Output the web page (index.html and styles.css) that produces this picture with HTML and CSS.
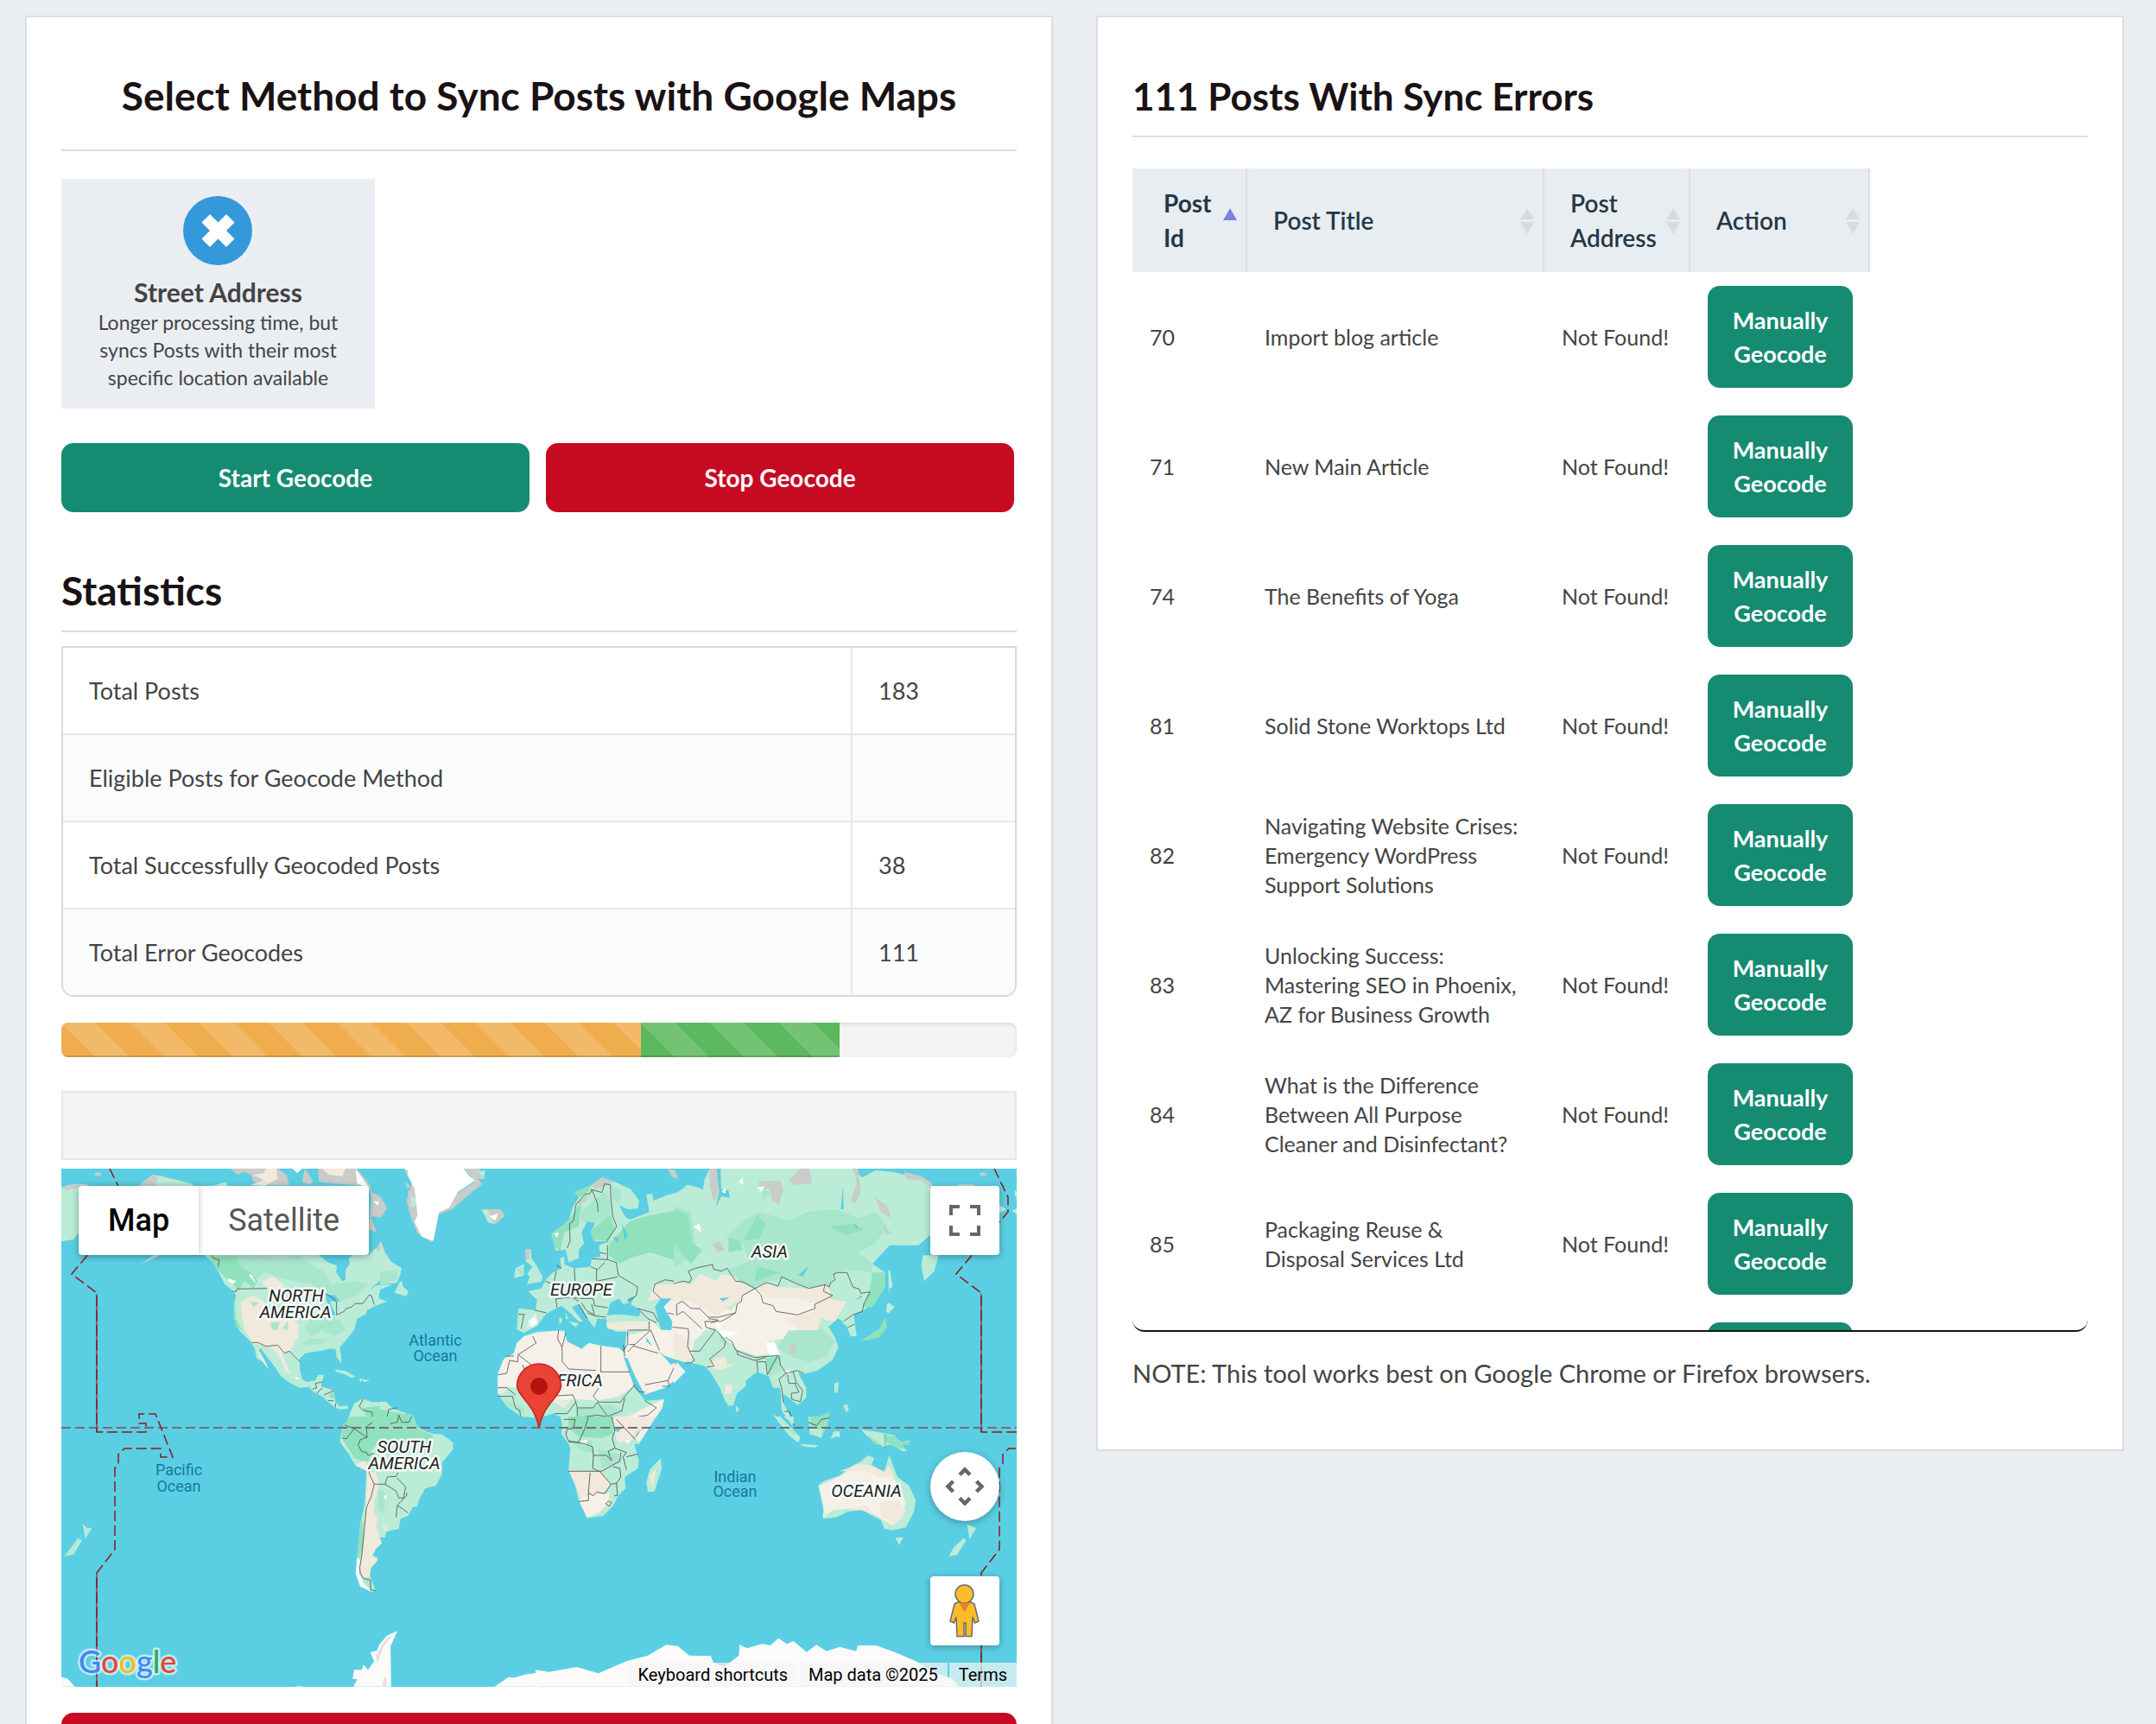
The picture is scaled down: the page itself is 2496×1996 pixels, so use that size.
FILE: index.html
```html
<!DOCTYPE html>
<html lang="en">
<head>
<meta charset="utf-8">
<title>Geocode Posts</title>
<link rel="stylesheet" href="styles.css">
</head>
<body>
<main class="page">
  <section class="panel">
    <h1 class="title title-center">Select Method to Sync Posts with Google Maps</h1>

    <button class="method" type="button">
      <svg class="method-icon" viewBox="0 0 80 80" aria-hidden="true">
        <circle cx="40" cy="40" r="40" fill="#3498db"/>
        <path d="M21.500 30.500 31 21 40.500 30.500 50 21 59.500 30.500 50 40 59.500 49.500 50 59 40.500 49.500 31 59 21.500 49.500 31 40Z" fill="#fff"/>
      </svg>
      <span class="method-name">Street Address</span>
      <span class="method-text">Longer processing time, but syncs Posts with their most specific location available</span>
    </button>

    <div class="actions">
      <button class="btn btn-green" type="button">Start Geocode</button>
      <button class="btn btn-red" type="button">Stop Geocode</button>
    </div>

    <h2 class="title title-stats">Statistics</h2>
    <table class="stats">
      <tbody>
        <tr><td>Total Posts</td><td>183</td></tr>
        <tr><td>Eligible Posts for Geocode Method</td><td></td></tr>
        <tr><td>Total Successfully Geocoded Posts</td><td>38</td></tr>
        <tr><td>Total Error Geocodes</td><td>111</td></tr>
      </tbody>
    </table>

    <div class="progress">
      <div class="bar bar-error" style="width:60.66%"></div>
      <div class="bar bar-done" style="width:20.77%"></div>
    </div>

    <input class="log" type="text" aria-label="Current address" readonly>

    <div class="map">
      <svg class="map-canvas" viewBox="0 0 1106 600" preserveAspectRatio="xMidYMid slice" role="img" aria-label="World map">
        <rect width="1106" height="600" fill="#5acfe3"/>
        <!-- north america -->
        <g transform="translate(-11 -13) scale(.33333)">
          <g fill="#bbecd7">
            <path d="M33 105 60 95 120 92 150 110 140 250 93 262 75 285 33 292Z"/>
            <path d="M305 95 350 60 400 70 480 90 520 110 620 110 900 110 960 150 1000 180 940 320 990 375 988 400 1008 430 1020 425 1020 390 1035 370 1030 345 1060 335 1100 340 1125 315 1145 320 1165 340 1175 360 1215 385 1212 400 1190 395 1150 420 1120 445 1095 470 1125 445 1185 440 1140 460 1135 490 1165 500 1125 515 1095 530 1090 545 1060 560 1050 600 1030 625 1000 660 1005 690 1005 715 990 695 985 665 960 665 935 672 910 675 880 680 860 700 862 740 870 770 885 780 915 775 925 755 945 755 935 795 950 800 980 810 985 850 1000 865 1028 862 1030 872 1005 875 985 870 960 850 940 830 905 812 895 798 860 800 830 785 795 760 780 735 745 690 725 662 720 670 740 705 755 737 735 710 712 700 705 665 690 640 650 600 633 560 632 520 640 480 625 460 600 440 580 400 560 365 530 339 420 320 310 370 360 335 330 250Z"/>
            <path d="M1190 470 1210 430 1218 448 1238 465 1230 482Z"/>
            <path d="M985 737 1020 742 1055 762 1040 766 1015 752 985 744ZM1065 768 1106 775 1075 782Z"/>
            <path d="M1000 990 1010 960 1025 920 1035 890 1050 855 1080 838 1110 850 1160 850 1180 870 1250 895 1262 912 1262 990Z"/>
            <path d="M560 99 605 85 610 99Z"/>
          </g>
          <path fill="#5acfe3" d="M915 330 960 365 988 375 1040 345 1030 310 960 300Z"/>
          <path fill="#a8e6cd" d="M580 340 720 345 800 350 850 339 900 370 950 400 970 440 1050 430 1100 440 1060 480 1000 500 960 470 900 440 800 420 740 400 700 430 640 400ZM900 560 960 545 1000 570 1020 600 980 620 940 600 900 620 880 590ZM860 650 900 630 960 630 930 650Z"/>
          <path fill="#90e1bd" d="M545 345 640 345 660 385 690 400 715 430 700 455 670 430 650 460 615 430 580 395ZM633 480 640 560 660 600 640 590 632 540ZM1140 430 1190 400 1212 400 1195 425ZM980 810 985 840 960 830ZM1080 870 1160 860 1200 885 1260 905 1260 990 1060 990 1110 940ZM1025 920 1060 900 1080 940 1040 990 1010 990Z"/>
          <path fill="#f1e9db" d="M655 500 700 480 740 500 770 560 820 550 858 580 855 625 830 670 800 680 830 755 810 740 790 690 760 660 700 645 670 600 660 550ZM730 435 765 410 790 430 810 450 760 465ZM712 665 735 700 750 735 725 700Z"/>
          <path fill="#a8e6cd" d="M760 575 790 570 785 600 765 600ZM800 595 820 570 820 600ZM690 500 720 505 700 520Z"/>
          <path fill="#c9ccc8" d="M620 39 645 60 665 50 690 58 700 85 740 95 825 97 815 60 785 39ZM870 85 878 39 890 55 907 85 895 95ZM925 39 928 85 1000 92 1100 100 1110 140 1100 250 1128 260 1108 205 1145 208 1165 175 1140 135 1110 120 1105 95 1060 39ZM1235 120 1262 90 1262 240ZM1125 318 1143 290 1162 340ZM303 97 330 75 355 60 372 72 355 99ZM145 58 160 50 176 60 155 67ZM33 105 70 95 130 97 130 99 50 115Z"/>
          <path fill="#f1e9db" d="M700 60 735 55 745 39 780 39 785 75 740 99 690 95 735 80ZM940 39 1020 39 1010 65 960 60Z"/>
          <path fill="#fff" d="M835 39 868 39 853 55ZM1055 39 1105 110 1060 90ZM1225 39 1260 39 1260 60 1235 55ZM1118 150 1138 155 1130 167ZM685 410 692 405 712 440ZM612 420 640 430 630 440 612 430ZM845 762 862 767 848 772ZM1240 180 1260 170 1255 200Z"/>
          <path fill="#bbecd7" d="M375 62 390 70 380 85 460 92 490 99 360 99Z"/>
          <path fill="#5acfe3" d="M950 475 985 480 1000 500 965 500 985 545 975 550 955 500Z"/>
          <g fill="none" stroke="#555" stroke-width="2.500">
            <path d="M628 465 640 466 642 457 748 455M950 472 980 492 989 503 989 547 1015 535 1022 525 1040 520 1055 507 1080 508 1102 478 1110 480 1120 512M555 340 565 352 581 356 578 380M695 643 715 643 745 656 785 652 808 680 825 673 862 710M905 805 920 800 915 785 940 780M920 820 940 800M945 825 980 810M960 845 978 845M985 855 985 868M1078 775 1078 782M1082 838 1068 865 1080 878 1112 885 1115 915 1097 925 1095 975M1115 918 1140 925 1150 915 1140 905 1170 895 1175 868M1175 895 1195 925 1205 890M1205 925 1232 920 1232 890M1235 920 1250 905M1020 930 1050 940 1095 975M1050 942 1025 978 1005 978"/>
          </g>
        </g>
        <!-- south america -->
        <g transform="translate(-11 287) scale(.35714 .33333)">
          <path fill="#bbecd7" d="M935 90 935 75 945 30 970 0 1170 0 1185 35 1220 60 1265 62 1300 90 1300 115 1265 160 1265 200 1245 240 1210 250 1190 290 1185 312 1170 315 1155 345 1130 355 1125 390 1085 400 1080 420 1060 420 1070 440 1050 460 1040 480 1055 500 1035 525 1030 545 1035 565 1050 605 1035 610 1000 590 985 545 990 500 995 430 1005 350 1015 300 1020 190 985 170 960 125Z"/>
          <path fill="#90e1bd" d="M945 30 970 0 1170 0 1185 35 1240 65 1200 80 1080 75 1040 110 1025 160 980 145 955 100 940 75ZM1000 360 1010 370 1008 460 985 515 995 430Z"/>
          <path fill="#f1e9db" d="M935 75 950 110 985 165 1020 155 1025 190 985 170 960 125ZM1022 190 1050 195 1062 235 1045 300 1045 335 1055 350 1052 385 1065 425 1070 440 1050 460 1038 485 1055 490 1055 502 1035 525 1030 555 1010 560 1000 530 1012 420 1018 310ZM1070 370 1090 395 1080 400Z"/>
          <path fill="#a8e6cd" d="M1060 250 1085 270 1075 340 1055 320ZM1010 570 1035 565 1040 600Z"/>
          <path fill="#fff" d="M990 490 1000 500 995 540 1010 580 1035 605 1000 590 985 545ZM1075 280 1085 270 1083 292Z"/>
          <g fill="#b4ead6"><path d="M100 373 115 388 131 386 108 425ZM85 422 98 430 70 480 40 485 60 458Z"/></g>
          <path fill="#fcfbfa" d="M978 938 990 912 975 912 980 880 1005 880 1010 862 1025 880 1045 850 1032 820 1055 812 1060 795 1085 762 1120 745 1098 798 1100 938ZM31 905 50 910 75 938H31ZM1435 938 1480 905 1500 907 1540 895 1580 890V938ZM785 938 810 935V938Z"/>
          <path fill="#e2e2e2" d="M1050 830 1085 770 1105 760 1075 800 1055 858ZM1075 910 1085 905V938H1072Z"/>
          <path fill="none" stroke="#555" stroke-width="2.500" d="M950 30 980 42 1022 73M980 42 955 77 940 75M1022 73 1020 35 1040 20M1022 73 1000 80 993 100 1005 122 1020 125 1025 135 1045 128M1028 185 1030 200 1045 235 1035 280 1020 315 1005 480 998 525 1000 545 1010 562 1033 568 1033 602 1050 605M1045 235 1080 235 1088 210 1115 208 1122 195M1080 235 1115 258 1125 283 1140 283 1147 245 1118 212M1150 265 1150 275 1120 308 1116 350M1120 308 1155 335"/>
        </g>
        <!-- europe, africa and western asia -->
        <g transform="translate(369 -13) scale(.33333)">
          <g fill="#bbecd7">
            <path d="M0 290 25 350 60 380 72 400 60 435 0 442ZM52 470 75 428 80 450 98 465 92 480Z"/>
            <path d="M0 850 20 848 40 868 75 895 110 895 122 940 185 960 240 980 255 995H0Z"/>
            <path d="M595 265 655 220 670 170 700 125 735 95 770 70 815 85 870 110 900 150 895 178 860 180 830 165 845 195 865 225 830 290 745 292 732 260 760 200 745 185 725 210 700 260 708 300 690 320 690 350 655 365 645 320 610 325Z"/>
            <path d="M820 200 870 215 935 190 925 130 945 125 950 150 1000 130 1040 120 1065 95 1110 105 1140 125 1125 80 1145 39H1270V795L1240 820 1225 865 1200 850 1180 800 1150 750 1120 715 1060 712 990 690 965 670 1010 720 1030 710 1060 745 990 800 915 825 870 740 845 680 860 650 855 605 820 605 790 590 785 560 755 560 745 592 720 560 690 510 665 520 705 570 690 570 660 540 630 515 600 530 575 545 545 585 500 610 475 598 480 525 540 530 545 495 515 465 560 455 575 425 600 400 630 385 625 350 640 345 640 372 675 385 730 380 735 350 765 345 760 305 800 290Z"/>
            <path d="M510 318 525 320 525 350 540 370 565 415 560 432 510 440 520 415 510 405 530 380 505 360ZM470 385 500 370 500 410 465 420Z"/>
            <path d="M655 570 690 575 680 590ZM622 555 633 560 630 577 622 575ZM645 540 655 560 645 562Z"/>
            <path d="M408 820 410 750 430 700 465 680 475 645 500 620 545 605 640 600 650 640 700 665 725 645 770 655 830 662 850 680 862 740 885 800 920 840 988 840 980 870 940 930 900 995H655L630 960 635 905 600 890 550 905 490 900 440 865Z"/>
          </g>
          <path fill="#90e1bd" d="M795 300 870 220 940 200 1060 180 1080 230 1100 330 1060 370 1000 350 940 330 880 345 830 370 795 340ZM595 265 655 220 680 180 700 150 690 240 640 260 625 325 605 310ZM730 255 800 200 815 250 790 290 740 285ZM675 120 735 95 720 125 690 140ZM0 875 80 890 110 895 120 940 185 965 180 995H0ZM700 910 800 900 850 950 830 990 700 990Z"/>
          <path fill="#a8e6cd" d="M690 200 740 150 780 120 800 160 800 200 760 230 700 220ZM805 100 840 115 830 160 805 140ZM1120 250 1170 330 1100 310ZM680 870 800 860 850 880 800 910 690 920ZM0 400 60 390 60 425 0 440ZM470 390 500 380 495 410ZM430 840 500 870 500 895 440 860ZM1200 90 1240 70 1260 120 1220 150Z"/>
          <path fill="#f5f0e8" d="M408 795 410 750 430 700 465 680 475 645 500 622 545 610 620 602 640 610 650 640 700 665 725 645 770 655 830 662 850 680 862 740 885 790 860 810 830 830 750 845 690 840 620 845 560 830 480 800ZM850 690 855 620 930 600 940 560 975 600 1015 600 1060 580 1130 590 1180 600 1130 720 1060 712 990 690 965 670 1010 720 1030 710 1060 745 990 800 915 825ZM985 510 1060 480 1140 500 1260 450 1260 650 1190 600 1120 600 1050 590 1010 600ZM900 880 985 840 980 870 940 930 900 990 860 950 845 910ZM540 540 548 580 510 590Z"/>
          <path fill="#f1e9db" d="M950 440 1020 440 1070 430 1110 410 1150 430 1200 405 1240 430 1260 460 1260 490 1200 540 1140 550 1060 500 1000 500 970 490 930 500ZM785 575 830 570 930 570 930 595 860 600 830 600 790 595ZM1150 700 1190 690 1190 720 1230 725 1170 745 1140 730ZM1200 790 1225 790 1220 820 1200 825ZM500 810 560 800 640 850 670 835 640 870 600 850ZM410 795 440 800 430 820 410 820Z"/>
          <path fill="#5acfe3" d="M788 548 800 505 830 490 845 510 865 505 860 490 885 482 870 510 905 530 900 552 830 545ZM955 520 975 490 1012 490 985 520 1015 570 1012 600 975 598 965 560ZM1180 490 1215 485 1190 500ZM845 690 860 700 885 760 920 825 990 800 992 840 920 845 880 790ZM925 625 945 655 925 640ZM810 275 830 280 822 297ZM840 230 860 270 850 290ZM1165 39 1180 39 1185 110 1210 120 1195 150 1160 175 1170 120Z"/>
          <path fill="#c9ccc8" d="M735 95 770 70 815 85 790 95 750 110ZM352 180 420 180 433 203 400 232 375 220ZM1000 39 1025 45 1035 75 1010 65ZM1145 39H1170L1165 120 1140 90ZM1155 310 1180 295 1195 315 1175 330ZM0 145 22 175 0 208ZM85 85 105 100 95 108ZM505 318H522L518 355 505 360ZM680 160 720 130 715 155ZM905 175 935 190 910 180Z"/>
          <path fill="#c9ccc8" d="M82 39 120 55 125 150 140 250 185 280 180 295 130 265 105 200 92 150 110 90ZM290 39H345L365 75 340 75 355 92 320 120 250 180 200 200 190 230 200 190 260 130 330 85Z"/>
          <path fill="#bbecd7" d="M352 180 375 185 395 232 375 225 365 205ZM340 50 365 45 360 72ZM108 130 128 150 120 175 105 170Z"/>
          <path fill="#fff" d="M100 39H290L310 65 330 80 270 120 240 175 205 190 185 290 145 275 120 225 130 200 120 110 95 60ZM380 205 410 195 400 220ZM1160 560 1190 570 1180 600 1250 610 1230 640 1200 630ZM515 570 530 555 545 570 530 590ZM1240 290 1260 285V295ZM605 265 620 260 615 280ZM435 800 440 805Z"/>
          <g fill="none" stroke="#555" stroke-width="2.500">
            <path d="M650 315 660 290 658 230 672 220 680 165 710 130 730 125 735 110 755 160 757 190M735 112 770 122 780 92 800 95 802 145 808 205 822 240 788 290M790 305 790 355 820 365 828 410M762 330 785 335M735 352 790 355M732 380 755 390 780 365M752 390V430L825 415M675 385 677 430M612 395 605 430M575 430 600 440M630 385 612 375M828 410 895 450 890 480 860 500M535 530 578 540M480 545 500 545 490 595M610 490 615 522M610 492 665 485 690 500M665 485 700 490 740 490 745 515 790 522M690 510 720 560M700 505 715 530 740 545M720 540 745 550 785 555M735 510 745 550M895 525 950 540 965 570M905 535 930 560 960 575M935 570V600H860M860 605V650L845 670M865 650 885 650 860 675M885 650 940 600 970 670M880 655 965 680M1015 590 1075 590 1070 640 1080 680 1090 710 1060 715M1080 675 1110 675 1180 605M1085 615 1100 597 1160 595 1170 570 1135 570 1050 505 1030 510V550L1050 535 1120 595M1030 548 1000 540M1110 530 1150 555 1200 540 1230 500 1260 455M975 490 948 465 955 440 990 425 1050 435 1080 420 1075 390 1155 372 1160 390 1205 385 1240 430 1260 435M1130 590 1190 580M1190 610 1200 640 1150 690 1155 730 1140 725M1200 640 1240 665 1260 690M850 690 845 650M920 790 1000 775 1030 710M1000 775 1005 795 980 795"/>
            <path d="M530 620 542 645 480 685 478 710 450 705 440 750 410 755M440 690H465M480 685 550 740M620 600 617 630 632 660 633 710 655 735 750 740M645 610 632 660M767 655V745H868M767 745 760 800 740 830 760 850 835 850 850 830 885 790M410 800H440L470 825M410 830H460L470 870 485 880 488 900M495 720 510 760M570 830 670 825 680 850 650 890 605 890M680 850 685 870 740 870 755 850 790 900 840 880 850 835M685 870 685 905 710 910 705 960 670 970M640 920H675M645 940H672L670 960M685 905 755 895 845 910 930 895 960 870 920 845M905 910 905 945 885 975 845 955M845 910 845 955 805 960M880 790 900 815 920 815M25 900 30 875 60 870M35 925 60 920 65 895 75 920 100 920 110 900"/>
          </g>
        </g>
        <!-- eastern asia -->
        <g transform="translate(709 -13) scale(.33333)">
          <path fill="#bbecd7" d="M0 130 45 100 100 120 105 90 130 39H620L655 70 700 45 760 50 860 75 897 95V265L850 305 750 305 690 370 735 400 735 450 700 500 660 530 625 545 635 620 615 622 600 585 570 565 540 590 560 625 572 660 550 705 500 740 450 752 430 745 460 800 460 835 430 860 412 845 380 820 380 850 417 925 410 930 375 880 370 800 345 800 330 760 290 745 270 760 215 805 210 850 190 865 170 820 150 750 120 730 70 715 0 700Z"/>
          <path fill="#bbecd7" d="M345 895 375 905 415 950 437 975 430 990 400 965ZM558 785 573 780 570 815 558 818ZM588 862 603 857 608 875 600 887ZM740 510 748 505 767 520 745 542 738 535ZM745 390 752 395 760 450 750 455 747 475ZM865 340H920L905 395 870 430 860 380ZM545 975 560 948 578 965 550 975ZM215 860 228 875 217 887ZM1185 115 1195 120V140L1185 135ZM1175 185 1195 175V200ZM1130 165 1155 180 1130 195Z"/>
          <path fill="#a8e6cd" d="M240 220 300 190 400 220 460 190 560 180 640 210 700 190 740 240 700 300 640 330 690 370 690 400 600 390 560 400 540 450 470 450 380 420 330 430 280 450 220 430 190 390 260 360 240 300 180 280ZM390 610 460 590 520 600 560 640 530 690 470 710 400 690 360 660ZM330 700 370 690 375 740 330 760ZM0 170 60 190 80 340 0 380ZM300 110 340 120 310 150ZM160 600 190 650 160 640Z"/>
          <path fill="#90e1bd" d="M0 180 50 200 65 300 100 320 60 370 0 300ZM270 240 290 200 320 230 300 280 240 290ZM540 240 620 230 660 250 600 270ZM290 380 370 400 280 430ZM690 400 735 400 735 450 690 520 655 520 680 465ZM645 640 715 595 735 555 740 590 715 625ZM468 925 495 905 540 885 535 930 515 970 475 960ZM320 700 370 690 330 750ZM190 280 230 290 240 320 190 330ZM650 945 740 965 790 985 830 998H700Z"/>
          <path fill="#f5f0e8" d="M0 490 60 470 150 520 200 530 240 480 300 450 360 480 540 480 545 520 500 560 480 600 400 600 380 630 330 640 340 680 290 690 220 665 180 610 150 590 110 600 70 640 60 710 0 700ZM0 715 40 745 0 785Z"/>
          <path fill="#f1e9db" d="M0 430 60 440 90 405 150 430 165 405 210 415 240 440 275 455 220 500 150 550 60 500 0 500ZM285 450 325 435 370 450 470 455 530 440 545 470 530 490 600 500 560 570 510 560 500 600 440 600 380 560 480 540 500 510 420 490 330 490ZM180 690 185 720 215 715 160 740 125 730 140 700ZM180 790 205 790 200 820 175 820ZM0 600 60 640 60 710 0 700Z"/>
          <path fill="#c9ccc8" d="M125 39H165L160 110 140 160 125 100ZM295 85 370 80 380 110 365 165 340 150 335 110 300 110ZM400 80 440 39H470L480 90 420 95ZM625 39H640L650 120 630 160 615 155 635 90ZM700 140 740 165 755 210 720 190ZM135 300 160 290 175 320 150 330ZM730 235 755 265 735 265ZM800 50 860 65 897 90V110L860 80 810 75ZM0 45 15 75 0 70ZM990 93 1040 93 1045 99H985ZM1060 58 1075 50 1088 60 1070 67ZM405 650 425 645 420 680 400 680Z"/>
          <path fill="#5acfe3" d="M150 39H162L165 110 190 115 195 140 165 135 145 175 158 120ZM432 410 468 378 450 412ZM580 180 588 100 590 180ZM535 590 570 560 590 570 560 600ZM160 490 195 485 170 500ZM630 495 650 480 655 485ZM625 230 640 240 635 250Z"/>
          <path fill="#fff" d="M225 85 240 70 240 95ZM290 105 315 100 305 120ZM320 645 350 640 370 690 330 685ZM145 560 175 570 160 600 230 610 190 620 205 650 180 630 150 605ZM70 240 90 230 95 260ZM165 120 180 105 180 125ZM385 740 405 740 400 755ZM420 975 437 975 430 987ZM0 110 20 90Z"/>
          <g fill="none" stroke="#555" stroke-width="2.500">
            <path d="M0 438 35 430 55 435 62 420 50 395 75 385 135 372 138 388 165 395 185 385 215 430 240 432 282 455 322 435 362 447 375 415 430 440 470 455 525 442 520 465 552 480 490 510 490 525 430 547 355 535 345 515 310 505 303 478 282 455M525 442 540 450 545 435 560 425 555 405 570 400H602L622 450 645 458 650 472 682 467 660 510 655 535 620 548 592 568M605 590 628 580M10 510 30 500 60 525 90 525 120 555 155 555 215 540 220 510 235 500 238 480 265 465 282 455M10 510V548L32 535 98 595M120 560 155 565 130 575M215 540 165 570 108 570 112 590 145 600 90 673H55L72 705 58 715M0 590 50 595 52 615 48 655 55 673M150 602 180 640 175 660 125 700 140 725 115 728M180 625 202 640 215 670 280 695 365 688 370 720 390 750 430 740 452 750M220 670 222 685 280 705 320 695M288 705 292 745M290 710H320L325 755 360 690M390 750 365 770 375 800 380 850M395 755 400 785 425 785M415 745 425 780 448 810 440 848 425 845 410 840 408 820 435 815 420 785M385 882H402L410 905 418 930M470 930H505L515 905 540 903"/>
            <path stroke="#777" d="M735 960V995"/>
          </g>
        </g>
        <!-- southern africa, oceania and antarctica -->
        <g transform="translate(549 287) scale(.38270 .33333)">
          <path fill="#bbecd7" d="M75 0H365L345 30 305 60 300 100 312 150 310 180 270 210 272 250 250 275 235 310 205 345 155 353 145 320 130 290 120 240 100 185 105 110 85 50ZM335 230 345 185 378 145 382 180 360 260 340 262ZM725 0H740L800 70 797 90 775 70 745 30ZM750 0H780L782 25ZM798 95 820 97 855 100 845 108 815 105ZM825 0H888L870 40 865 75 830 60ZM900 55 920 50V75L905 60 895 80ZM985 45 1040 55 1085 65 1125 122 1105 118 1080 95 1050 105 1030 85 1000 65ZM1115 85H1135L1125 92Z"/>
          <path fill="#90e1bd" d="M100 0H230L235 60 200 75 130 70 100 40ZM1050 62 1085 68 1115 110 1100 112 1060 90ZM830 0H885L865 45 830 40Z"/>
          <path fill="#a8e6cd" d="M110 80 170 80 180 130 140 120 110 90ZM190 110 250 130 260 160 200 180ZM740 10 790 60 780 65Z"/>
          <path fill="#f1e9db" d="M235 0H360L345 30 305 50 290 85 250 90 240 60ZM100 185 195 192 228 235 200 270 230 290 200 325 165 335 145 310 125 250ZM345 210 365 180 355 245Z"/>
          <path fill="#f5f0e8" d="M130 290 160 275 225 265 215 310 190 335 155 350Z"/>
          <path fill="#5acfe3" d="M235 45 260 40 250 55Z"/>
          <path fill="#bbecd7" d="M855 240 870 225 920 205 960 170 985 155 1005 135 1025 145 1015 170 1055 190 1070 135 1095 210 1130 240 1150 290 1145 330 1120 385 1080 395 1055 390 1045 360 1020 345 990 325 945 330 910 350 870 355 870 320ZM1088 420H1112L1100 447ZM1305 375 1333 388 1313 425ZM1295 422 1303 430 1275 480 1250 485 1265 455Z"/>
          <path fill="#f5f0e8" d="M857 242 920 208 950 185 1010 170 1055 195 1075 200 1100 240 1120 300 1110 350 1080 378 1045 355 1000 322 945 320 900 325 875 345 870 300Z"/>
          <path fill="#f1e9db" d="M920 190 980 165 1020 170 1055 195 1070 170 1085 210 1040 210 1000 190ZM1040 300 1100 290 1120 330 1090 370 1050 350ZM930 320 1000 310 1030 345 985 325Z"/>
          <path fill="#fcfbfa" d="M0 880 40 887 125 870 190 892 275 850 340 830 395 793 430 797 465 830 530 832 538 855 570 870 615 830 617 793 640 805 685 790 710 795 735 770 760 790 780 780 820 818 850 793 880 815 920 800 970 815 975 795 1030 795 1090 820 1150 850 1210 890 1260 910 1280 938H0Z"/>
          <path fill="#fff" d="M270 85 285 80 280 95ZM130 85 158 80 150 98ZM868 335 875 345 872 352Z"/>
          <g fill="none" stroke="#555" stroke-width="2.500">
            <path d="M85 10 120 10 115 40 95 45 92 65 100 85 150 95 172 105 175 135 215 135 230 155M100 88 130 90 150 40 160 0M230 0 240 50 232 75 240 110 220 120 225 140 232 150M245 10 302 80M240 110 275 125 265 140 275 185M275 140 310 130M98 190H200L255 155 258 125M175 135 173 180 195 192 228 235 245 232 258 210 255 180 235 175M165 195 160 265 175 275 185 262 210 268 228 235M160 265V292L130 295M245 232 248 275H238M212 303 222 293 230 300 222 312ZM825 20 850 32 865 10 888 5"/>
            <path stroke="#6fae9b" d="M1058 60V115"/>
          </g>
        </g>

        <!-- equator and date line -->
        <path d="M0 300H1106" stroke="#7b6a72" stroke-width="2" stroke-dasharray="11 5" fill="none"/>
        <g fill="none" stroke-width="1.500">
          <path stroke="#77696f" stroke-width="2" d="M41 145V305M41 468V600"/>
          <path stroke="#8a1a1c" stroke-dasharray="12 5" d="M56 0 72 33V50L12 122 41 144V305H98V295H90V284H109L129 334H115V324H73L66 331V342L62 347V441L41 468V600"/>
        </g>
        <g fill="none" stroke-width="1.500" transform="translate(1024 0)">
          <path stroke="#77696f" stroke-width="2" d="M41 145V305M41 468V600"/>
          <path stroke="#8a1a1c" stroke-dasharray="12 5" d="M56 0 72 33V50L12 122 41 144V305H98M98 324H73L66 331V342L62 347V441L41 468V600"/>
        </g>

        <g class="land-label">
          <text x="272" y="154">NORTH</text><text x="271" y="173">AMERICA</text>
          <text x="602" y="147">EUROPE</text>
          <text x="820" y="103">ASIA</text>
          <text x="594" y="252">AFRICA</text>
          <text x="397" y="329">SOUTH</text><text x="397" y="348">AMERICA</text>
          <text x="932" y="380">OCEANIA</text>
        </g>
        <g class="sea-label">
          <text x="433" y="205">Atlantic</text><text x="433" y="223">Ocean</text>
          <text x="136" y="355">Pacific</text><text x="136" y="374">Ocean</text>
          <text x="780" y="363">Indian</text><text x="780" y="380">Ocean</text>
        </g>
        <path d="M553 300C550 284 543 276 537 268 531 261 527.500 256 527.500 251.500A25.500 25.500 0 0 1 578.500 251.500C578.500 256 575 261 569 268 563 276 556 284 553 300Z" fill="#ea4335" stroke="#c5221f" stroke-width="1.500"/>
        <circle cx="553" cy="252" r="10" fill="#b31412"/>
      </svg>

      <div class="map-type">
        <button type="button" class="map-type-on">Map</button>
        <button type="button">Satellite</button>
      </div>
      <button class="map-control fullscreen" type="button" aria-label="Toggle fullscreen view">
        <svg width="36" height="36" viewBox="0 0 36 36"><path d="M2 12V2H12M24 2H34V12M34 24V34H24M12 34H2V24" fill="none" stroke="#666" stroke-width="4"/></svg>
      </button>
      <button class="map-control camera" type="button" aria-label="Map camera controls">
        <svg width="46" height="46" viewBox="0 0 46 46"><path d="M17 9.500 23 3.500 29 9.500M17 36.500 23 42.500 29 36.500M9.500 17 3.500 23 9.500 29M36.500 17 42.500 23 36.500 29" fill="none" stroke="#666" stroke-width="4.500"/></svg>
      </button>
      <button class="map-control pegman" type="button" aria-label="Street View Pegman">
        <svg width="36" height="62" viewBox="0 0 36 62"><g fill="#fbbc2c" stroke="#6b6b6b" stroke-width="1.500"><path d="M9.500 21H25.500L29 23 34 43 29.500 45 27 38 26 60.500H19V45H17V60.500H9L8 38 5.500 45 1 43 6 23Z"/><circle cx="17.500" cy="11.500" r="10.500"/></g><path d="M11.500 21.500H24L17.500 32.500Z" fill="#e6812f"/></svg>
      </button>
      <svg class="map-logo" width="124" height="56" viewBox="0 0 124 56" role="img" aria-label="Google">
        <text x="4" y="40"><tspan fill="#4285f4">G</tspan><tspan fill="#ea4335">o</tspan><tspan fill="#fbbc05">o</tspan><tspan fill="#4285f4">g</tspan><tspan fill="#34a853">l</tspan><tspan fill="#ea4335">e</tspan></text>
      </svg>
      <div class="map-legal">
        <button type="button">Keyboard shortcuts</button>
        <span>Map data ©2025</span>
        <a href="#terms">Terms</a>
      </div>
    </div>

    <button class="btn btn-red btn-wide" type="button" aria-label="Clear"></button>
  </section>

  <section class="panel">
    <h2 class="title title-errors">111 Posts With Sync Errors</h2>
    <div class="errors-scroll">
      <table class="errors">
        <colgroup><col class="col-id"><col class="col-title"><col class="col-address"><col class="col-action"></colgroup>
        <thead>
          <tr>
            <th class="sorted" scope="col">Post Id<svg class="sort" viewBox="0 0 16 30"><path d="M8 0 16 14H0Z" fill="#7b82e0"/></svg></th>
            <th scope="col">Post Title<svg class="sort" viewBox="0 0 16 30"><path d="M8 0 16 13H0ZM8 30 16 16H0Z" fill="#d8dadd"/></svg></th>
            <th scope="col">Post Address<svg class="sort" viewBox="0 0 16 30"><path d="M8 0 16 13H0ZM8 30 16 16H0Z" fill="#d8dadd"/></svg></th>
            <th scope="col">Action<svg class="sort" viewBox="0 0 16 30"><path d="M8 0 16 13H0ZM8 30 16 16H0Z" fill="#d8dadd"/></svg></th>
          </tr>
        </thead>
        <tbody>
          <tr><td>70</td><td>Import blog article</td><td>Not Found!</td><td><button class="btn btn-green btn-row" type="button">Manually Geocode</button></td></tr>
          <tr><td>71</td><td>New Main Article</td><td>Not Found!</td><td><button class="btn btn-green btn-row" type="button">Manually Geocode</button></td></tr>
          <tr><td>74</td><td>The Benefits of Yoga</td><td>Not Found!</td><td><button class="btn btn-green btn-row" type="button">Manually Geocode</button></td></tr>
          <tr><td>81</td><td>Solid Stone Worktops Ltd</td><td>Not Found!</td><td><button class="btn btn-green btn-row" type="button">Manually Geocode</button></td></tr>
          <tr><td>82</td><td>Navigating Website Crises: Emergency WordPress Support Solutions</td><td>Not Found!</td><td><button class="btn btn-green btn-row" type="button">Manually Geocode</button></td></tr>
          <tr><td>83</td><td>Unlocking Success: Mastering SEO in Phoenix, AZ for Business Growth</td><td>Not Found!</td><td><button class="btn btn-green btn-row" type="button">Manually Geocode</button></td></tr>
          <tr><td>84</td><td>What is the Difference Between All Purpose Cleaner and Disinfectant?</td><td>Not Found!</td><td><button class="btn btn-green btn-row" type="button">Manually Geocode</button></td></tr>
          <tr><td>85</td><td>Packaging Reuse &amp; Disposal Services Ltd</td><td>Not Found!</td><td><button class="btn btn-green btn-row" type="button">Manually Geocode</button></td></tr>
          <tr><td></td><td></td><td></td><td><button class="btn btn-green btn-row" type="button" aria-label="Manually Geocode"></button></td></tr>
        </tbody>
      </table>
    </div>
    <p class="note">NOTE: This tool works best on Google Chrome or Firefox browsers.</p>
  </section>
</main>
</body>
</html>
```

FILE: styles.css
```css
* { box-sizing: border-box; }

html, body { height: 100%; }

body {
  margin: 0;
  overflow: hidden;
  background: #eaeef3;
  color: #444;
  font: 400 27px/40px Lato, "Open Sans", sans-serif;
}

button, input { font: inherit; color: inherit; border: 0; margin: 0; }
button { cursor: pointer; }

.page {
  display: grid;
  grid-template-columns: 1fr 1fr;
  align-items: start;
  gap: 50px;
  height: 100%;
  overflow: hidden;
  padding: 18px 37px 0 29px;
}

.panel {
  min-width: 0;
  padding: 60px 40px 68px;
  background: #fff;
  border: 2px solid #dcdee0;
}

.title {
  margin: 0;
  color: #1a1214;
  font-size: 46px;
  line-height: 62px;
  font-weight: 700;
  border-bottom: 2px solid #dcdddd;
}
.title-center { padding-bottom: 31px; text-align: center; }
.title-stats { padding-bottom: 15px; margin: 60px 0 16px; }
.title-errors { padding-bottom: 15px; margin-bottom: 36px; font-size: 44px; }

.method {
  display: flex;
  flex-direction: column;
  align-items: center;
  width: calc(33% - 2px);
  margin-top: 32px;
  padding: 20px 28px 20px;
  background: #eaeef3;
}
.method-icon { width: 80px; height: 80px; margin-bottom: 12px; }
.method-name { font-size: 30px; line-height: 38px; font-weight: 700; }
.method-text { font-size: 23px; line-height: 32px; }

.btn {
  border-radius: 14px;
  color: #fff;
  font-size: 28px;
  line-height: 40px;
  font-weight: 700;
}
.btn-green { background: #158b72; }
.btn-red { background: #c50a22; }
.btn-wide { display: block; width: 100%; height: 80px; margin-top: 30px; }

.actions {
  display: grid;
  grid-template-columns: 1fr 1fr;
  gap: 19px;
  margin: 40px 3px 0 0;
}
.actions .btn { height: 80px; }

.stats {
  width: 100%;
  border: 2px solid #d8d9da;
  border-radius: 0 0 14px 14px;
  border-spacing: 0;
  overflow: hidden;
}
.stats td { height: 101px; padding: 0 30px; border-bottom: 2px solid #e6e7e9; }
.stats td + td { width: 190px; border-left: 2px solid #e6e7e9; }
.stats tr:nth-child(even) td { background: #fafbfd; }
.stats tr:last-child td { height: 99px; border-bottom: 0; }

.progress {
  display: flex;
  height: 40px;
  margin: 30px 0 39px;
  overflow: hidden;
  border-radius: 8px;
  background: #f4f4f4;
  box-shadow: inset 0 2px 4px rgba(0, 0, 0, .1);
}
.bar {
  background-image: linear-gradient(45deg, rgba(255, 255, 255, .15) 25%, transparent 25%, transparent 50%, rgba(255, 255, 255, .15) 50%, rgba(255, 255, 255, .15) 75%, transparent 75%);
  background-size: 80px 80px;
  box-shadow: inset 0 -2px 0 rgba(0, 0, 0, .15);
}
.bar-error { background-color: #f0ad4e; }
.bar-done { background-color: #5cb85c; }

.log {
  display: block;
  width: 100%;
  height: 80px;
  padding: 0 20px;
  border: 2px solid #e6e7e7;
  background: #f4f4f4;
}

.map {
  position: relative;
  height: 600px;
  margin-top: 10px;
  overflow: hidden;
  font-family: Roboto, sans-serif;
}
.map-canvas { display: block; width: 100%; height: 100%; }
.land-label { font-size: 20px; font-style: italic; text-anchor: middle; fill: #222; stroke: #f6fcf9; stroke-width: 5px; stroke-linejoin: round; paint-order: stroke; }
.sea-label { font-size: 18px; text-anchor: middle; fill: #17789a; }

.map-type {
  position: absolute;
  left: 20px;
  top: 20px;
  display: flex;
  height: 80px;
  border-radius: 4px;
  background: #fff;
  box-shadow: 0 2px 8px rgba(0, 0, 0, .3);
}
.map-type button { padding: 0 34px; background: none; font-size: 36px; color: #565656; }
.map-type .map-type-on { color: #000; font-weight: 500; box-shadow: 2px 0 5px rgba(0, 0, 0, .15); }

.map-control {
  position: absolute;
  right: 20px;
  display: flex;
  align-items: center;
  justify-content: center;
  width: 80px;
  height: 80px;
  padding: 0;
  border-radius: 4px;
  background: #fff;
  box-shadow: 0 2px 8px rgba(0, 0, 0, .3);
}
.fullscreen { top: 20px; }
.camera { bottom: 192px; border-radius: 50%; }
.pegman { bottom: 48px; }

.map-logo { position: absolute; left: 16px; bottom: 0; font: 500 36px Lato, sans-serif; stroke: rgba(255, 255, 255, .6); stroke-width: 5px; stroke-linejoin: round; paint-order: stroke; }

.map-legal {
  position: absolute;
  right: 0;
  bottom: 0;
  display: flex;
  gap: 2px;
  font-size: 20px;
  line-height: 28px;
  color: #000;
}
.map-legal > * { padding: 0 11px; background: rgba(245, 245, 245, .7); color: #000; text-decoration: none; }

.errors-scroll {
  max-height: 1347px;
  overflow-y: auto;
  scrollbar-width: none;
  border-bottom: 2px solid #1a1214;
  border-radius: 0 0 14px 14px;
}
.errors { width: 854px; table-layout: fixed; border-spacing: 0; font-size: 25px; line-height: 34px; }
.col-id { width: 133px; }
.col-title { width: 344px; }
.col-address { width: 169px; }
.col-action { width: 208px; }
.errors th {
  position: relative;
  height: 120px;
  padding: 0 20px 0 30px;
  background: #e8edf1;
  border-right: 2px solid #dbdfe2;
  color: #253746;
  font-size: 28px;
  line-height: 40px;
  font-weight: 600;
  text-align: left;
}
.errors .sorted { padding: 0 30px 0 36px; font-weight: 700; }
.sort { position: absolute; right: 10px; top: 46px; width: 16px; height: 30px; }
.errors td { height: 150px; padding: 0 20px; }
.btn-row { display: block; width: 100%; min-height: 118px; padding: 20px 16px; font-size: 27px; line-height: 39px; }

.note { margin: 28px 0 0; font-size: 29px; line-height: 40px; }
```
